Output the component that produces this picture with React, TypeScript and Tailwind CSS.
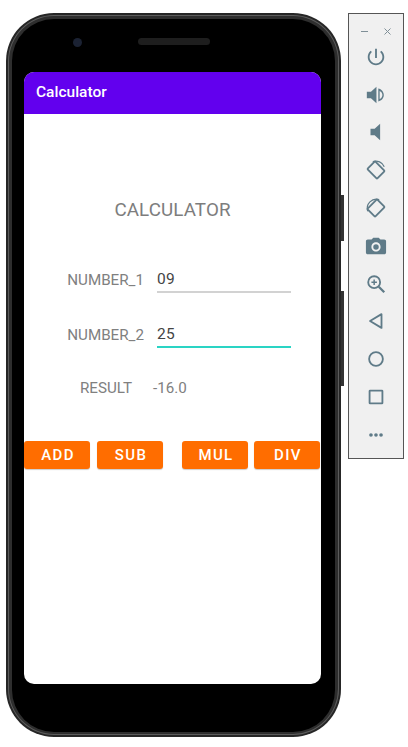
import React from "react";

const Icon = ({ children }: { children: React.ReactNode }) => (
  <div className="flex h-[37.8px] items-center justify-center">
    <svg width="22" height="22" viewBox="0 0 24 24" className="text-[#5f7b88]" fill="currentColor">
      {children}
    </svg>
  </div>
);

const Field = ({ label, value, active }: { label: string; value: string; active?: boolean }) => (
  <div className="flex h-[35px] items-start">
    <div className="w-[120px] pt-[4px] text-right text-[15.2px] leading-[20px] text-[#808080]">{label}</div>
    <div
      className={`ml-[13px] h-[27px] w-[134px] border-b-2 text-[15.5px] leading-[22px] tracking-[0.3px] text-[#444444] ${
        active ? "border-[#2ad4c4]" : "border-[#d2d2d2]"
      }`}
    >
      <div className="pt-[2px]">{value}</div>
    </div>
  </div>
);

const Btn = ({ label, className }: { label: string; className?: string }) => (
  <div
    className={`flex h-[28px] w-[66px] items-center justify-center rounded-[3px] bg-[#ff6d00] pl-[2px] text-[15px] font-medium tracking-[1.4px] text-white shadow-[0_1px_1px_rgba(0,0,0,0.2)] ${className ?? ""}`}
  >
    {label}
  </div>
);

export default function App() {
  return (
    <div className="relative flex h-[747px] w-[408px] items-start overflow-hidden bg-white pl-[6px] pt-[13px] font-['Roboto',sans-serif]">
      {/* Phone */}
      <div className="relative h-[724px] w-[335px] shrink-0 rounded-[48px] bg-[#262626] p-[2px]">
        <div className="absolute right-[-3px] top-[182px] h-[46px] w-[3px] bg-[#333333]" />
        <div className="absolute right-[-3px] top-[278px] h-[95px] w-[3px] bg-[#333333]" />
        <div className="h-full w-full rounded-[46px] bg-[#5c5c5c] p-[1px]">
          <div className="h-full w-full rounded-[45px] bg-[#2e2e2e] px-[3px] pb-[2px] pt-[3px]">
            <div className="flex h-full w-full flex-col rounded-[42px] bg-black px-[12px] pt-[3px]">
              <div className="relative h-[50px] shrink-0">
                <div className="absolute left-[49px] top-[16px] h-[9px] w-[9px] rounded-full bg-[#1b2233]" />
                <div className="absolute left-[114px] top-[16px] h-[7px] w-[72px] rounded-full bg-[#1e1e1e]" />
              </div>
              {/* Screen */}
              <div className="flex h-[612px] w-[297px] shrink-0 flex-col overflow-hidden rounded-[10px] bg-white">
                <div className="flex h-[42px] shrink-0 items-center bg-[#6200ee] pl-[12px] text-[15.5px] font-medium text-white">
                  Calculator
                </div>
                <div className="pt-[85px] text-center text-[18.8px] leading-[22px] tracking-[0.1px] text-[#7d7d7d]">
                  CALCULATOR
                </div>
                <div className="mt-[45px] flex flex-col gap-[20px]">
                  <Field label="NUMBER_1" value="09" />
                  <Field label="NUMBER_2" value="25" active />
                </div>
                <div className="mt-[22px] flex h-[20px] items-center text-[15.2px] text-[#808080]">
                  <div className="w-[108px] text-right">RESULT</div>
                  <div className="ml-[21px] text-[#808080]">-16.0</div>
                </div>
                <div className="mt-[43px] flex">
                  <Btn label="ADD" />
                  <Btn label="SUB" className="ml-[7px]" />
                  <Btn label="MUL" className="ml-[19px]" />
                  <Btn label="DIV" className="ml-[6px]" />
                </div>
              </div>
            </div>
          </div>
        </div>
      </div>

      {/* Side panel */}
      <div className="ml-[7px] h-[446px] w-[56px] shrink-0 border border-[#555555] bg-[#f0f0f0]">
        <div className="flex h-[24px] items-end justify-between px-[12px] pb-[3px] text-[#7f8f97]">
          <svg width="7" height="7" viewBox="0 0 7 7" stroke="currentColor" fill="none"><path d="M0 3.5h7" /></svg>
          <svg width="7" height="7" viewBox="0 0 7 7" stroke="currentColor" fill="none"><path d="M0.5 0.5l6 6M6.5 0.5l-6 6" /></svg>
        </div>
        <Icon>
          <path d="M13 3h-2v10h2V3zm4.83 2.17l-1.42 1.42C17.99 7.86 19 9.81 19 12c0 3.87-3.13 7-7 7s-7-3.13-7-7c0-2.19 1.01-4.14 2.58-5.42L6.17 5.17C4.23 6.82 3 9.26 3 12c0 4.97 4.03 9 9 9s9-4.03 9-9c0-2.74-1.23-5.18-3.17-6.83z" />
        </Icon>
        <Icon>
          <path d="M2 8.5v7h4.5l6 5.5V3L6.5 8.5H2z" />
          <path d="M14.5 5v14c3.5-.6 6-3.6 6-7s-2.500-6.400-6-7zm1.500 2.600c1.700.7 3 2.400 3 4.400s-1.300 3.700-3 4.400V7.600z" fillRule="evenodd" />
        </Icon>
        <Icon>
          <path d="M6 8.500v7h4.500l6 5.500V3l-6 5.500H6z" />
        </Icon>
        <Icon>
          <g fill="none" stroke="currentColor" strokeWidth="2">
            <rect x="4.500" y="6" width="15" height="12" rx="1" transform="rotate(45 12 12)" />
            <path d="M8.500 2.800A10 10 0 0 1 21 8.500" strokeWidth="1.300" />
          </g>
        </Icon>
        <Icon>
          <g fill="none" stroke="currentColor" strokeWidth="2">
            <rect x="4.500" y="6" width="15" height="12" rx="1" transform="rotate(-45 12 12)" />
            <path d="M3 15.500A10 10 0 0 1 15.500 2.800" strokeWidth="1.300" />
          </g>
        </Icon>
        <Icon>
          <path fillRule="evenodd" d="M9 3L7.170 5H3c-1.100 0-2 .9-2 2v12c0 1.100.9 2 2 2h18c1.100 0 2-.9 2-2V7c0-1.100-.9-2-2-2h-4.170L15 3H9zm3 15c-2.760 0-5-2.240-5-5s2.240-5 5-5 5 2.240 5 5-2.240 5-5 5z" />
          <circle cx="12" cy="13" r="3" />
        </Icon>
        <Icon>
          <g fill="none" stroke="currentColor" strokeWidth="2">
            <circle cx="10" cy="10" r="6.500" />
            <path d="M15 15l6 6" strokeWidth="2.500" />
            <path d="M10 7v6M7 10h6" strokeWidth="1.600" />
          </g>
        </Icon>
        <Icon>
          <path d="M18 4.500v15L5.500 12z" fill="none" stroke="currentColor" strokeWidth="2" strokeLinejoin="round" />
        </Icon>
        <Icon>
          <circle cx="12" cy="12" r="7.500" fill="none" stroke="currentColor" strokeWidth="2" />
        </Icon>
        <Icon>
          <rect x="5" y="5" width="14" height="14" rx="0.5" fill="none" stroke="currentColor" strokeWidth="2" />
        </Icon>
        <Icon>
          <circle cx="6.500" cy="12" r="2" />
          <circle cx="12" cy="12" r="2" />
          <circle cx="17.500" cy="12" r="2" />
        </Icon>
      </div>
    </div>
  );
}
